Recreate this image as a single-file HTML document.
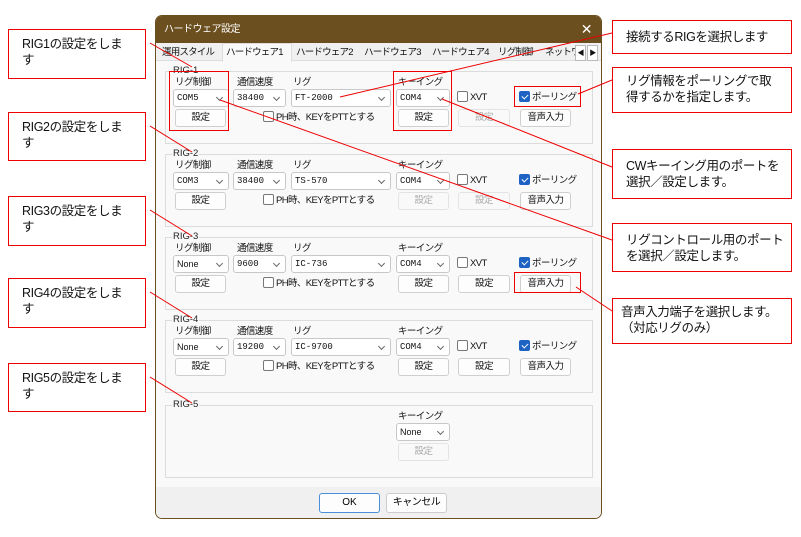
<!DOCTYPE html>
<html><head><meta charset="utf-8"><style>
*{box-sizing:border-box;margin:0;padding:0}
body{width:801px;height:537px;background:#fff;position:relative;overflow:hidden;font-family:"Liberation Sans","Noto Sans CJK JP",sans-serif;}
.a{position:absolute}
.dlg{left:155px;top:15px;width:447px;height:504px;border:1px solid #6b4f1e;border-radius:7px;background:#f9f9f9;overflow:hidden}
.title{left:0;top:0;width:100%;height:27px;background:#6b4f1e;color:#fff;font-size:10px;line-height:27px;padding-left:8px;letter-spacing:-0.5px}
.tabs{left:0;top:27px;width:100%;height:18px;background:#f0f0f0;border-bottom:1px solid #ddd;font-size:9.5px;letter-spacing:-0.8px}
.tab{position:absolute;top:2px;height:16px;line-height:15px;white-space:nowrap;overflow:hidden;color:#111;padding-left:3px}
.grp{position:absolute;left:9px;width:428px;height:73px;border:1px solid #dcdcdc;}
.gl{position:absolute;left:6px;top:-7px;background:#f9f9f9;font-size:9.5px;padding:0 1px;color:#222;line-height:12px}
.lb{position:absolute;top:2px;font-size:9.5px;color:#111;letter-spacing:-0.6px;white-space:nowrap}
.cb{position:absolute;top:17px;height:18px;background:#fff;border:1px solid #c8c8c8;border-radius:3px;font-size:9px;line-height:16px;padding-left:3px;color:#111;font-family:"Liberation Mono","Noto Sans CJK JP",monospace}
.cb:after{content:"";position:absolute;right:6px;top:5px;width:4px;height:4px;border-right:1px solid #666;border-bottom:1px solid #666;transform:rotate(45deg)}
.bt{position:absolute;top:37px;height:18px;background:#fdfdfd;border:1px solid #cfcfcf;border-radius:3px;font-size:9.5px;line-height:16px;text-align:center;color:#111;letter-spacing:-0.5px;white-space:nowrap}
.bt.d{color:#aaa;border-color:#e3e3e3;background:#f9f9f9}
.ck{position:absolute;font-size:9.5px;color:#111;line-height:14px;white-space:nowrap;letter-spacing:-0.6px}
.ck i{display:inline-block;width:11px;height:11px;border:1px solid #777;border-radius:2px;vertical-align:-2px;margin-right:2px;background:#fff}
.ck i.on{background:#1e63c4;border-color:#1e63c4;position:relative}
.ck i.on:after{content:"";position:absolute;left:3px;top:1px;width:3px;height:5px;border-right:1px solid #fff;border-bottom:1px solid #fff;transform:rotate(45deg)}
.ann{position:absolute;border:1px solid #e00;background:#fff;font-size:12.5px;line-height:16px;padding:6px 0 0 13px;color:#111;letter-spacing:-0.4px;white-space:nowrap}
.hl{position:absolute;border:1px solid #e00}
</style></head><body>

<div class="a dlg">
 <div class="a title">ハードウェア設定<span style="position:absolute;right:9px;top:0;font-size:14px">✕</span></div>
 <div class="a tabs">
  <div class="tab" style="left:3px;width:62px">運用スタイル</div>
  <div class="tab" style="left:66px;width:70px;top:0;height:19px;background:#f9f9f9;border:1px solid #ddd;border-bottom:none;line-height:17px">ハードウェア1</div>
  <div class="tab" style="left:137px;width:68px">ハードウェア2</div>
  <div class="tab" style="left:205px;width:68px">ハードウェア3</div>
  <div class="tab" style="left:273px;width:66px">ハードウェア4</div>
  <div class="tab" style="left:339px;width:47px">リグ制御</div>
  <div class="tab" style="left:386px;width:33px">ネットワ</div>
  <div class="tab" style="left:419px;width:11px;border:1px solid #bbb;background:#fff;font-size:7px;text-align:center;padding:0">◀</div>
  <div class="tab" style="left:431px;width:11px;border:1px solid #bbb;background:#fff;font-size:7px;text-align:center;padding:0">▶</div>
 </div>

 <div class="grp" style="top:55px"><span class="gl">RIG-1</span>
  <span class="lb" style="left:9px">リグ制御</span><span class="lb" style="left:71px">通信速度</span><span class="lb" style="left:127px">リグ</span><span class="lb" style="left:232px">キーイング</span>
  <div class="cb" style="left:7px;width:56px">COM5</div><div class="cb" style="left:67px;width:53px">38400</div><div class="cb" style="left:125px;width:100px">FT-2000</div><div class="cb" style="left:230px;width:54px">COM4</div>
  <span class="ck" style="left:291px;top:19px"><i></i>XVT</span><span class="ck" style="left:353px;top:19px"><i class="on"></i>ポーリング</span>
  <div class="bt" style="left:9px;width:51px">設定</div><span class="ck" style="left:97px;top:39px"><i></i>PH時、KEYをPTTとする</span>
  <div class="bt" style="left:232px;width:51px">設定</div><div class="bt d" style="left:292px;width:52px">設定</div><div class="bt" style="left:354px;width:51px">音声入力</div>
 </div>
 <div class="grp" style="top:138px"><span class="gl">RIG-2</span>
  <span class="lb" style="left:9px">リグ制御</span><span class="lb" style="left:71px">通信速度</span><span class="lb" style="left:127px">リグ</span><span class="lb" style="left:232px">キーイング</span>
  <div class="cb" style="left:7px;width:56px">COM3</div><div class="cb" style="left:67px;width:53px">38400</div><div class="cb" style="left:125px;width:100px">TS-570</div><div class="cb" style="left:230px;width:54px">COM4</div>
  <span class="ck" style="left:291px;top:19px"><i></i>XVT</span><span class="ck" style="left:353px;top:19px"><i class="on"></i>ポーリング</span>
  <div class="bt" style="left:9px;width:51px">設定</div><span class="ck" style="left:97px;top:39px"><i></i>PH時、KEYをPTTとする</span>
  <div class="bt d" style="left:232px;width:51px">設定</div><div class="bt d" style="left:292px;width:52px">設定</div><div class="bt" style="left:354px;width:51px">音声入力</div>
 </div>
 <div class="grp" style="top:221px"><span class="gl">RIG-3</span>
  <span class="lb" style="left:9px">リグ制御</span><span class="lb" style="left:71px">通信速度</span><span class="lb" style="left:127px">リグ</span><span class="lb" style="left:232px">キーイング</span>
  <div class="cb" style="left:7px;width:56px;font-family:'Liberation Sans',sans-serif">None</div><div class="cb" style="left:67px;width:53px">9600</div><div class="cb" style="left:125px;width:100px">IC-736</div><div class="cb" style="left:230px;width:54px">COM4</div>
  <span class="ck" style="left:291px;top:19px"><i></i>XVT</span><span class="ck" style="left:353px;top:19px"><i class="on"></i>ポーリング</span>
  <div class="bt" style="left:9px;width:51px">設定</div><span class="ck" style="left:97px;top:39px"><i></i>PH時、KEYをPTTとする</span>
  <div class="bt" style="left:232px;width:51px">設定</div><div class="bt" style="left:292px;width:52px">設定</div><div class="bt" style="left:354px;width:51px">音声入力</div>
 </div>
 <div class="grp" style="top:304px"><span class="gl">RIG-4</span>
  <span class="lb" style="left:9px">リグ制御</span><span class="lb" style="left:71px">通信速度</span><span class="lb" style="left:127px">リグ</span><span class="lb" style="left:232px">キーイング</span>
  <div class="cb" style="left:7px;width:56px;font-family:'Liberation Sans',sans-serif">None</div><div class="cb" style="left:67px;width:53px">19200</div><div class="cb" style="left:125px;width:100px">IC-9700</div><div class="cb" style="left:230px;width:54px">COM4</div>
  <span class="ck" style="left:291px;top:19px"><i></i>XVT</span><span class="ck" style="left:353px;top:19px"><i class="on"></i>ポーリング</span>
  <div class="bt" style="left:9px;width:51px">設定</div><span class="ck" style="left:97px;top:39px"><i></i>PH時、KEYをPTTとする</span>
  <div class="bt" style="left:232px;width:51px">設定</div><div class="bt" style="left:292px;width:52px">設定</div><div class="bt" style="left:354px;width:51px">音声入力</div>
 </div>
 <div class="grp" style="top:389px"><span class="gl">RIG-5</span>
  <span class="lb" style="left:232px">キーイング</span>
  <div class="cb" style="left:230px;width:54px;font-family:'Liberation Sans',sans-serif">None</div>
  <div class="bt d" style="left:232px;width:51px">設定</div>
 </div>
 <div class="a" style="left:0;top:471px;width:100%;height:33px;background:#f0f0f0"></div>
 <div class="a" style="left:163px;top:477px;width:61px;height:20px;border:1px solid #4a90d9;border-radius:3px;background:#fdfdfd;font-size:10px;text-align:center;line-height:18px">OK</div>
 <div class="a" style="left:230px;top:477px;width:61px;height:20px;border:1px solid #ccc;border-radius:3px;background:#fdfdfd;font-size:10px;text-align:center;line-height:18px;letter-spacing:-0.5px">キャンセル</div>
</div>

<div class="hl" style="left:169px;top:71px;width:60px;height:60px"></div>
<div class="hl" style="left:393px;top:71px;width:59px;height:60px"></div>
<div class="hl" style="left:514px;top:86px;width:67px;height:21px"></div>
<div class="hl" style="left:514px;top:272px;width:67px;height:21px"></div>

<div class="ann" style="left:8px;top:29px;width:138px;height:50px">RIG1の設定をしま<br>す</div>
<div class="ann" style="left:8px;top:112px;width:138px;height:49px">RIG2の設定をしま<br>す</div>
<div class="ann" style="left:8px;top:196px;width:138px;height:50px">RIG3の設定をしま<br>す</div>
<div class="ann" style="left:8px;top:278px;width:138px;height:50px">RIG4の設定をしま<br>す</div>
<div class="ann" style="left:8px;top:363px;width:138px;height:49px">RIG5の設定をしま<br>す</div>

<div class="ann" style="left:612px;top:20px;width:180px;height:34px;padding-top:8px">接続するRIGを選択します</div>
<div class="ann" style="left:612px;top:67px;width:180px;height:46px;padding-top:5px">リグ情報をポーリングで取<br>得するかを指定します。</div>
<div class="ann" style="left:612px;top:149px;width:180px;height:50px;padding-top:8px">CWキーイング用のポートを<br>選択／設定します。</div>
<div class="ann" style="left:612px;top:223px;width:180px;height:49px;padding-top:8px">リグコントロール用のポート<br>を選択／設定します。</div>
<div class="ann" style="left:612px;top:298px;width:180px;height:46px;padding:5px 0 0 8px">音声入力端子を選択します。<br>（対応リグのみ）</div>

<svg class="a" style="left:0;top:0" width="801" height="537"><g stroke="#e00" stroke-width="1" fill="none">
<line x1="150" y1="43" x2="192" y2="67"/>
<line x1="150" y1="126" x2="192" y2="152"/>
<line x1="150" y1="210" x2="192" y2="236"/>
<line x1="150" y1="292" x2="192" y2="318"/>
<line x1="150" y1="377" x2="192" y2="403"/>
<line x1="612" y1="33" x2="340" y2="97"/>
<line x1="612" y1="80" x2="578" y2="94"/>
<line x1="612" y1="167" x2="442" y2="99"/>
<line x1="612" y1="240" x2="220" y2="100"/>
<line x1="612" y1="311" x2="576" y2="287"/>
</g></svg>
</body></html>
